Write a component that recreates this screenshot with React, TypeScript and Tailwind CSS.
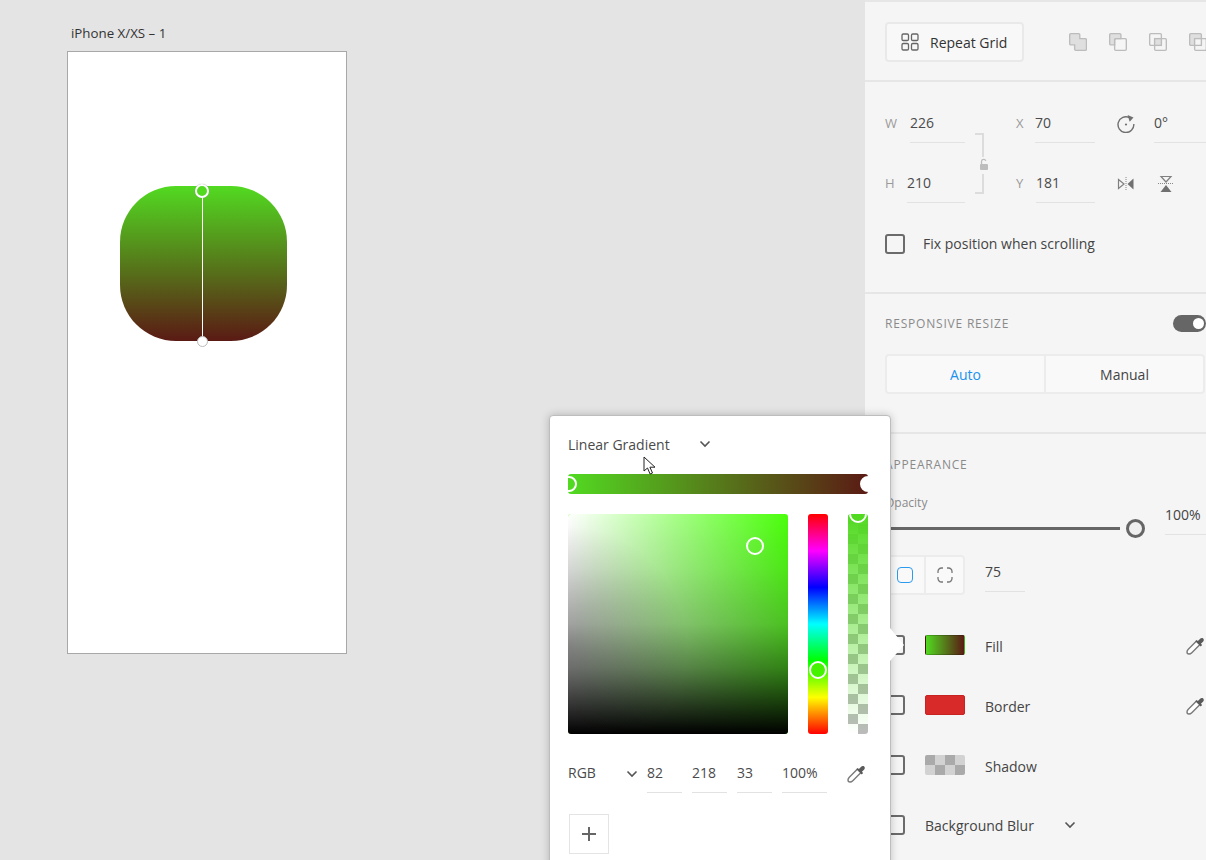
const Chevron = ({ className = "" }: { className?: string }) => (
  <svg width="12" height="8" viewBox="0 0 12 8" className={className} fill="none" stroke="#555" strokeWidth="1.6">
    <path d="M1.500 1.500 6 6l4.500-4.500" />
  </svg>
);

const Eyedropper = () => (
  <svg width="19" height="19" viewBox="0 0 19 19" fill="none" className="shrink-0">
    <path d="M10.500 5 2.300 13.200C1.500 14 1 15 1 16c0 1.200.8 2 2 2 1 0 2-.5 2.800-1.300L14 8.500" stroke="#7a7a7a" strokeWidth="1.400" fill="#ffffff" />
    <path d="M9.300 5.300 10.700 3.900l1.200 1.200 2-2.200C14.900 1.900 16.300 1.700 17.200 2.500s.8 2.300-.2 3.300l-2.100 2 1.200 1.200-1.400 1.400z" fill="#5a5a5a" />
  </svg>
);

const Check = ({ className = "" }: { className?: string }) => (
  <div className={`w-5 h-5 shrink-0 rounded-[3px] border-2 border-[#6b6b6b] ${className}`} />
);

const Field = ({ value, w, pl = "" }: { value: string; w: string; pl?: string }) => (
  <div className={`h-[39px] flex items-center border-b border-[#e2e2e2] text-[#4b4b4b] ${w} ${pl}`}>
    <span className="-mt-px">{value}</span>
  </div>
);

const BoolIcon = ({ kind }: { kind: number }) => (
  <svg width="18" height="18" viewBox="1 1 16 16" fill="none" stroke="#bcbcbc" strokeWidth="1.200" className="shrink-0">
    {kind === 0 && <path d="M1.600 2.600a1 1 0 0 1 1-1h7a1 1 0 0 1 1 1v3.400h4.900a1 1 0 0 1 1 1V15.400a1 1 0 0 1-1 1H7a1 1 0 0 1-1-1V11.500H2.600a1 1 0 0 1-1-1z" fill="#dfdfdf" />}
    {kind === 1 && <><path d="M1.600 2.600a1 1 0 0 1 1-1h8a1 1 0 0 1 1 1V6H7a1 1 0 0 0-1 1v4.500H2.600a1 1 0 0 1-1-1z" fill="#dfdfdf" /><rect x="6" y="6" width="10.400" height="10.400" rx="1" /></>}
    {kind === 2 && <><rect x="1.600" y="1.600" width="10.400" height="10.400" rx="1" /><rect x="6" y="6" width="10.400" height="10.400" rx="1" /><rect x="6" y="6" width="6" height="6" fill="#dfdfdf" /></>}
    {kind === 3 && <><rect x="1.600" y="1.600" width="10.400" height="10.400" rx="1" fill="#dfdfdf" /><rect x="6" y="6" width="10.400" height="10.400" rx="1" /><rect x="6" y="6" width="6" height="6" fill="#f5f5f5" /></>}
  </svg>
);

function Panel() {
  return (
    <div className="w-[341px] shrink-0 h-full flex flex-col bg-[#f5f5f5] overflow-hidden border-t-2 border-[#e6e6e6] text-[14px] text-[#444]">
      {/* Repeat grid */}
      <div className="h-[80px] shrink-0 border-b-2 border-[#e6e6e6] pl-5 pt-5 flex items-start">
        <div className="w-[139px] h-10 shrink-0 rounded border-2 border-[#e9e9e9] bg-[#f8f8f8] flex items-center pl-[14px] gap-[11px] text-[#333]">
          <svg width="18" height="18" viewBox="0 0 18 18" fill="none" stroke="#666" strokeWidth="1.300" className="shrink-0">
            <rect x="1" y="1" width="6.500" height="6.500" rx="1.300" />
            <rect x="10.500" y="1" width="6.500" height="6.500" rx="1.300" />
            <rect x="1" y="10.500" width="6.500" height="6.500" rx="1.300" />
            <rect x="10.500" y="10.500" width="6.500" height="6.500" rx="1.300" />
          </svg>
          <span>Repeat Grid</span>
        </div>
        <div className="flex gap-[22px] ml-[45px] mt-[11px]">
          <BoolIcon kind={0} />
          <BoolIcon kind={1} />
          <BoolIcon kind={2} />
          <BoolIcon kind={3} />
        </div>
      </div>

      {/* Transform */}
      <div className="relative h-[212px] shrink-0 border-b-2 border-[#e6e6e6] pl-5 pt-[22px]">
        <div className="flex items-start">
          <span className="w-[25px] h-[39px] flex items-center text-[13px] text-[#9a9a9a]">W</span>
          <Field value="226" w="w-[55px]" />
          <span className="w-[19px] h-[39px] ml-[51px] flex items-center text-[13px] text-[#9a9a9a]">X</span>
          <Field value="70" w="w-[60px]" />
          <svg width="18" height="18" viewBox="0 0 18 18" fill="none" stroke="#707070" strokeWidth="1.400" className="ml-[22px] mt-[11px] shrink-0">
            <path d="M12.500 2.600A7.900 7.900 0 1 0 16.800 9" />
            <path d="M10.600 0 16.500 2.400l-3.800 4.300z" fill="#707070" stroke="none" />
            <circle cx="9" cy="9.500" r="1.100" fill="#707070" stroke="none" />
          </svg>
          <div className="ml-[19px]">
            <Field value="0°" w="w-[52px]" />
          </div>
        </div>
        <div className="flex items-start mt-[21px]">
          <span className="w-[22px] h-[39px] flex items-center text-[13px] text-[#9a9a9a]">H</span>
          <Field value="210" w="w-[58px]" />
          <span className="w-[20px] h-[39px] ml-[51px] flex items-center text-[13px] text-[#9a9a9a]">Y</span>
          <Field value="181" w="w-[59px]" />
          <svg width="18" height="14" viewBox="0 0 18 14" className="ml-[22px] mt-[13px] shrink-0">
            <path d="M1.500 2.500 7 7l-5.500 4.500z" fill="none" stroke="#808080" strokeWidth="1.200" />
            <path d="M16.500 1.500v11L10.500 7z" fill="#707070" />
            <path d="M9 0v14" stroke="#888" strokeWidth="1" strokeDasharray="1 1" />
          </svg>
          <svg width="16" height="18" viewBox="0 0 16 18" className="ml-[23px] mt-[11px] shrink-0">
            <path d="M3 1.500h10L8 7z" fill="none" stroke="#808080" strokeWidth="1.200" />
            <path d="M2.500 17h11L8 10z" fill="#707070" />
            <path d="M0 8.500h16" stroke="#888" strokeWidth="1" strokeDasharray="1 1" />
          </svg>
        </div>
        <div className="absolute left-[110px] top-[51px] w-[9px] h-[61px]">
          <div className="absolute right-0 top-0 w-[9px] h-[24px] border-t-2 border-r-2 border-[#dcdcdc]" />
          <svg width="10" height="13" viewBox="0 0 10 13" className="absolute left-[4px] top-[25px]">
            <path d="M2.500 6V3.500a2.200 2.200 0 0 1 4.300-.6" fill="none" stroke="#bdbdbd" strokeWidth="1.300" />
            <rect x="1" y="6" width="8" height="6" rx="1" fill="#bdbdbd" />
          </svg>
          <div className="absolute right-0 bottom-0 w-[9px] h-[20px] border-b-2 border-r-2 border-[#dcdcdc]" />
        </div>
        <div className="flex items-center mt-[30px]">
          <Check />
          <span className="ml-[18px]">Fix position when scrolling</span>
        </div>
      </div>

      {/* Responsive resize */}
      <div className="h-[140px] shrink-0 border-b-2 border-[#e6e6e6] pl-5 pt-[21px]">
        <div className="flex items-center justify-between h-[17px]">
          <span className="text-[12px] tracking-[0.8px] text-[#8a8a8a]">RESPONSIVE RESIZE</span>
          <div className="w-[33px] h-[17px] rounded-full bg-[#666] relative">
            <div className="absolute right-[2px] top-[3px] w-[11px] h-[11px] rounded-full bg-white" />
          </div>
        </div>
        <div className="mt-[22px] w-[320px] h-10 flex rounded border-2 border-[#ececec] bg-[#f9f9f9]">
          <div className="w-[159px] flex items-center justify-center border-r-2 border-[#ececec] text-[#1b93ee]">Auto</div>
          <div className="flex-1 flex items-center justify-center text-[#444]">Manual</div>
        </div>
      </div>

      {/* Appearance */}
      <div className="flex-1 pl-5 pt-[23px]">
        <div className="h-4 flex items-center text-[12px] tracking-[0.8px] text-[#8a8a8a]">APPEARANCE</div>
        <div className="flex items-start mt-[22px]">
          <div className="w-[260px]">
            <div className="h-4 flex items-center text-[12px] text-[#8a8a8a]">Opacity</div>
            <div className="mt-2 h-[18px] flex items-center">
              <div className="flex-1 h-[3px] bg-[#666]" />
              <div className="ml-[6px] w-[19px] h-[19px] rounded-full border-[3px] border-[#666] bg-[#f0f0f0]" />
            </div>
          </div>
          <div className="ml-[20px] w-[41px] h-[40px] flex items-center border-b border-[#e2e2e2]">100%</div>
        </div>
        <div className="flex items-start mt-[18px]">
          <div className="w-20 h-10 flex rounded border-2 border-[#ececec] bg-[#f9f9f9] items-center">
            <div className="w-[39px] h-full flex items-center justify-center border-r-2 border-[#ececec]">
              <div className="w-4 h-4 -ml-px rounded-[4px] border-[1.500px] border-[#2b9bf0]" />
            </div>
            <div className="flex-1 flex items-center justify-center">
              <svg width="16" height="16" viewBox="0 0 16 16" fill="none" stroke="#777" strokeWidth="1.300">
                <path d="M1 6V4.500A3.500 3.500 0 0 1 4.500 1H6M10 1h1.500A3.500 3.500 0 0 1 15 4.500V6M15 10v1.500a3.500 3.500 0 0 1-3.500 3.500H10M6 15H4.500A3.500 3.500 0 0 1 1 11.500V10" />
              </svg>
            </div>
          </div>
          <div className="ml-5 w-10 h-[37px] flex items-center border-b border-[#e2e2e2] pb-[3px]">75</div>
        </div>
        <div className="flex flex-col gap-10 mt-10">
          <div className="h-5 flex items-center">
            <Check />
            <div className="ml-5 w-10 h-5 rounded-[2px] border border-[#00000033] bg-[linear-gradient(to_right,#52da21,#5a1a14)]" />
            <span className="ml-5 flex-1 mt-[2px]">Fill</span>
            <div className="mr-px"><Eyedropper /></div>
          </div>
          <div className="h-5 flex items-center">
            <Check />
            <div className="ml-5 w-10 h-5 rounded-[2px] border border-[#c92222] bg-[#d92a2a]" />
            <span className="ml-5 flex-1 mt-[2px]">Border</span>
            <div className="mr-px"><Eyedropper /></div>
          </div>
          <div className="h-5 flex items-center">
            <Check />
            <div className="ml-5 w-10 h-5 rounded-[2px] bg-[conic-gradient(#d2d2d2_25%,#aaaaaa_0_50%,#d2d2d2_0_75%,#aaaaaa_0)] bg-[length:20px_20px]" />
            <span className="ml-5 mt-[2px]">Shadow</span>
          </div>
          <div className="h-5 flex items-center">
            <Check />
            <span className="ml-5">Background Blur</span>
            <Chevron className="ml-[30px]" />
          </div>
        </div>
      </div>
    </div>
  );
}

function Popover() {
  return (
    <>
      <div className="absolute left-[549px] top-[415px] w-[342px] h-[470px] bg-white rounded border border-[#bdbdbd] shadow-[0_0_8px_rgba(0,0,0,0.22)] pl-[18px] pt-[18px] text-[14px] text-[#4a4a4a]">
        <div className="h-5 flex items-center">
          <span>Linear Gradient</span>
          <Chevron className="ml-[29px]" />
        </div>
        <div className="relative mt-5 w-[300px] h-5 rounded-[3px] overflow-hidden bg-[linear-gradient(to_right,#52da21,#5a1a14)]">
          <div className="absolute left-[-7px] top-[2px] w-4 h-4 rounded-full border-2 border-white bg-[#52da21]" />
          <div className="absolute right-[-8px] top-[2px] w-4 h-4 rounded-full border-2 border-white bg-white" />
        </div>
        <div className="flex gap-5 mt-5 h-[220px]">
          <div className="relative w-[220px] h-full rounded-[3px] overflow-hidden bg-[#4aff0a]">
            <div className="absolute inset-0 bg-[linear-gradient(to_right,#ffffff,rgba(255,255,255,0))]" />
            <div className="absolute inset-0 bg-[linear-gradient(to_bottom,rgba(0,0,0,0),rgba(0,0,0,0.1)_25%,rgba(0,0,0,0.27)_50%,rgba(0,0,0,0.52)_70%,rgba(0,0,0,0.77)_85%,#000000)]" />
            <div className="absolute inset-0 bg-[linear-gradient(to_bottom,rgba(255,255,255,0),rgba(255,255,255,0.1)_50%,rgba(255,255,255,0.05)_75%,rgba(255,255,255,0))]" />
            <div className="absolute inset-0 bg-[radial-gradient(circle_120px_at_0%_60%,rgba(0,0,0,0.2),rgba(0,0,0,0))]" />
            <div className="absolute left-[178px] top-[23px] w-[18px] h-[18px] rounded-full border-2 border-white" />
          </div>
          <div className="relative w-5 h-full rounded-[3px] bg-[linear-gradient(to_bottom,#ff0000,#ff00ff,#0000ff,#00ffff,#00ff00,#ffff00,#ff0000)]">
            <div className="absolute left-px top-[147px] w-[18px] h-[18px] rounded-full border-2 border-white bg-[#45f200]" />
          </div>
          <div className="relative w-5 h-full rounded-[3px] overflow-hidden bg-[conic-gradient(#ffffff_25%,#bbbbbb_0_50%,#ffffff_0_75%,#bbbbbb_0)] bg-[length:20px_20px]">
            <div className="absolute inset-0 bg-[linear-gradient(to_bottom,#52da21,rgba(82,218,33,0))]" />
            <div className="absolute left-px top-[-9px] w-[18px] h-[18px] rounded-full border-2 border-white bg-[#52da21]" />
          </div>
        </div>
        <div className="flex items-start mt-5">
          <div className="w-[79px] h-[39px] flex items-center">
            <span className="w-[58px] -mt-[2px]">RGB</span>
            <Chevron />
          </div>
          <div className="flex gap-[10px]">
            <Field value="82" w="w-[35px]" />
            <Field value="218" w="w-[35px]" />
            <Field value="33" w="w-[35px]" />
            <Field value="100%" w="w-[45px]" />
          </div>
          <div className="ml-5 mt-[10px]"><Eyedropper /></div>
        </div>
        <div className="ml-px mt-[21px] w-10 h-10 border border-[#e4e4e4] flex items-center justify-center">
          <svg width="14" height="14" viewBox="0 0 14 14" stroke="#666" strokeWidth="2">
            <path d="M7 0v14M0 7h14" />
          </svg>
        </div>
      </div>
      <svg width="16" height="34" viewBox="0 0 16 34" className="absolute left-[890px] top-[628px]">
        <path d="M0 0 14 17 0 33z" fill="#ffffff" />
      </svg>
      <svg width="14" height="20" viewBox="0 0 14 20" className="absolute left-[643px] top-[456px]">
        <path d="M1 1v14l3.500-3 2.600 6 2.400-1-2.600-5.800H12z" fill="#fff" stroke="#222" strokeWidth="1" />
      </svg>
    </>
  );
}

export default function App() {
  return (
    <div className="relative w-[1206px] h-[860px] overflow-hidden flex bg-[#e4e4e4] font-['Open_Sans',sans-serif] text-[13.500px]">
      <div className="relative flex-1 h-full">
        <div className="absolute left-[71px] top-[24px] text-[13.300px] leading-[18px] text-[#333]">iPhone X/XS – 1</div>
        <div className="absolute left-[67px] top-[51px] w-[280px] h-[603px] bg-white border border-[#a8a8a8]">
          <div className="absolute left-[52px] top-[134px] w-[167px] h-[155px] rounded-[56px] bg-[linear-gradient(to_bottom,#52da21,#5a1a14)]" />
          <div className="absolute left-[133.500px] top-[139px] w-[1.500px] h-[150px] bg-white" />
          <div className="absolute left-[127px] top-[132px] w-[14px] h-[14px] rounded-full border-2 border-white bg-[#52da21] shadow-[0_0_1px_#888]" />
          <div className="absolute left-[129px] top-[284px] w-[11px] h-[11px] rounded-full bg-white border border-[#bbb]" />
        </div>
      </div>
      <Panel />
      <Popover />
    </div>
  );
}
